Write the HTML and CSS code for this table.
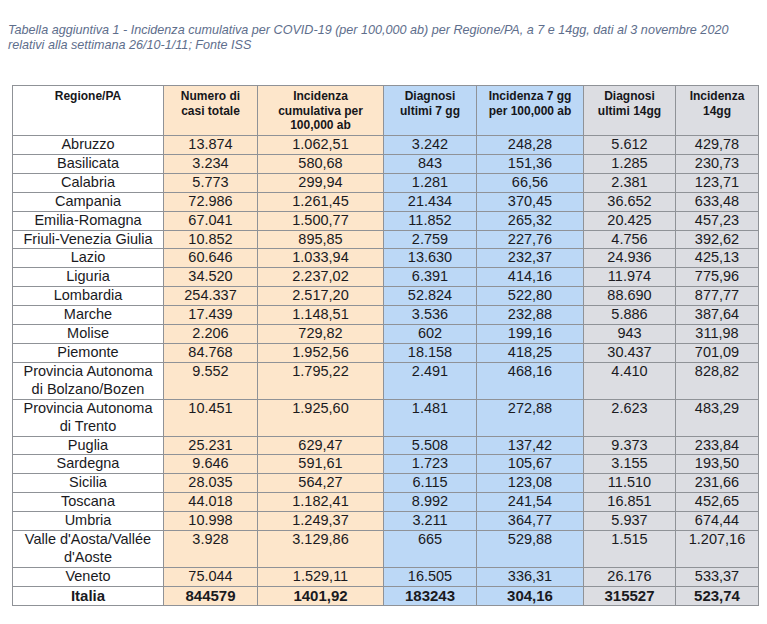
FILE: index.html
```html
<!DOCTYPE html>
<html lang="it">
<head>
<meta charset="utf-8">
<title>Tabella aggiuntiva 1</title>
<link rel="stylesheet" href="styles.css">
</head>
<body>
<div class="page">
  <p class="caption">Tabella aggiuntiva 1 - Incidenza cumulativa per COVID-19 (per 100,000 ab) per Regione/PA, a 7 e 14gg, dati al 3 novembre 2020<br>relativi alla settimana 26/10-1/11; Fonte ISS</p>
  <table class="data">
    <colgroup>
      <col class="w-reg"><col class="w-num"><col class="w-cum"><col class="w-d7"><col class="w-i7"><col class="w-d14"><col class="w-i14">
    </colgroup>
    <thead>
      <tr>
        <th>Regione/PA</th>
        <th class="or">Numero di<br>casi totale</th>
        <th class="or">Incidenza<br>cumulativa per<br>100,000 ab</th>
        <th class="bl">Diagnosi<br>ultimi 7 gg</th>
        <th class="bl">Incidenza 7 gg<br>per 100,000 ab</th>
        <th class="gr">Diagnosi<br>ultimi 14gg</th>
        <th class="gr">Incidenza<br>14gg</th>
      </tr>
    </thead>
    <tbody>
      <tr><td>Abruzzo</td><td class="or">13.874</td><td class="or">1.062,51</td><td class="bl">3.242</td><td class="bl">248,28</td><td class="gr">5.612</td><td class="gr">429,78</td></tr>
      <tr><td>Basilicata</td><td class="or">3.234</td><td class="or">580,68</td><td class="bl">843</td><td class="bl">151,36</td><td class="gr">1.285</td><td class="gr">230,73</td></tr>
      <tr><td>Calabria</td><td class="or">5.773</td><td class="or">299,94</td><td class="bl">1.281</td><td class="bl">66,56</td><td class="gr">2.381</td><td class="gr">123,71</td></tr>
      <tr><td>Campania</td><td class="or">72.986</td><td class="or">1.261,45</td><td class="bl">21.434</td><td class="bl">370,45</td><td class="gr">36.652</td><td class="gr">633,48</td></tr>
      <tr><td>Emilia-Romagna</td><td class="or">67.041</td><td class="or">1.500,77</td><td class="bl">11.852</td><td class="bl">265,32</td><td class="gr">20.425</td><td class="gr">457,23</td></tr>
      <tr><td>Friuli-Venezia Giulia</td><td class="or">10.852</td><td class="or">895,85</td><td class="bl">2.759</td><td class="bl">227,76</td><td class="gr">4.756</td><td class="gr">392,62</td></tr>
      <tr><td>Lazio</td><td class="or">60.646</td><td class="or">1.033,94</td><td class="bl">13.630</td><td class="bl">232,37</td><td class="gr">24.936</td><td class="gr">425,13</td></tr>
      <tr><td>Liguria</td><td class="or">34.520</td><td class="or">2.237,02</td><td class="bl">6.391</td><td class="bl">414,16</td><td class="gr">11.974</td><td class="gr">775,96</td></tr>
      <tr><td>Lombardia</td><td class="or">254.337</td><td class="or">2.517,20</td><td class="bl">52.824</td><td class="bl">522,80</td><td class="gr">88.690</td><td class="gr">877,77</td></tr>
      <tr><td>Marche</td><td class="or">17.439</td><td class="or">1.148,51</td><td class="bl">3.536</td><td class="bl">232,88</td><td class="gr">5.886</td><td class="gr">387,64</td></tr>
      <tr><td>Molise</td><td class="or">2.206</td><td class="or">729,82</td><td class="bl">602</td><td class="bl">199,16</td><td class="gr">943</td><td class="gr">311,98</td></tr>
      <tr><td>Piemonte</td><td class="or">84.768</td><td class="or">1.952,56</td><td class="bl">18.158</td><td class="bl">418,25</td><td class="gr">30.437</td><td class="gr">701,09</td></tr>
      <tr><td>Provincia Autonoma<br>di Bolzano/Bozen</td><td class="or">9.552</td><td class="or">1.795,22</td><td class="bl">2.491</td><td class="bl">468,16</td><td class="gr">4.410</td><td class="gr">828,82</td></tr>
      <tr><td>Provincia Autonoma<br>di Trento</td><td class="or">10.451</td><td class="or">1.925,60</td><td class="bl">1.481</td><td class="bl">272,88</td><td class="gr">2.623</td><td class="gr">483,29</td></tr>
      <tr><td>Puglia</td><td class="or">25.231</td><td class="or">629,47</td><td class="bl">5.508</td><td class="bl">137,42</td><td class="gr">9.373</td><td class="gr">233,84</td></tr>
      <tr><td>Sardegna</td><td class="or">9.646</td><td class="or">591,61</td><td class="bl">1.723</td><td class="bl">105,67</td><td class="gr">3.155</td><td class="gr">193,50</td></tr>
      <tr><td>Sicilia</td><td class="or">28.035</td><td class="or">564,27</td><td class="bl">6.115</td><td class="bl">123,08</td><td class="gr">11.510</td><td class="gr">231,66</td></tr>
      <tr><td>Toscana</td><td class="or">44.018</td><td class="or">1.182,41</td><td class="bl">8.992</td><td class="bl">241,54</td><td class="gr">16.851</td><td class="gr">452,65</td></tr>
      <tr><td>Umbria</td><td class="or">10.998</td><td class="or">1.249,37</td><td class="bl">3.211</td><td class="bl">364,77</td><td class="gr">5.937</td><td class="gr">674,44</td></tr>
      <tr><td>Valle d'Aosta/Vallée<br>d'Aoste</td><td class="or">3.928</td><td class="or">3.129,86</td><td class="bl">665</td><td class="bl">529,88</td><td class="gr">1.515</td><td class="gr">1.207,16</td></tr>
      <tr><td>Veneto</td><td class="or">75.044</td><td class="or">1.529,11</td><td class="bl">16.505</td><td class="bl">336,31</td><td class="gr">26.176</td><td class="gr">533,37</td></tr>
      <tr class="total"><td>Italia</td><td class="or">844579</td><td class="or">1401,92</td><td class="bl">183243</td><td class="bl">304,16</td><td class="gr">315527</td><td class="gr">523,74</td></tr>
    </tbody>
  </table>
</div>
</body>
</html>
```

FILE: styles.css
```css
html, body {
  margin: 0;
  padding: 0;
  background: #ffffff;
}

.page {
  padding: 23px 0 0 12px;
}

.caption {
  margin: 0 0 32px -4px;
  font-family: "Liberation Sans", Arial, sans-serif;
  font-style: italic;
  font-size: 12.6px;
  line-height: 15px;
  white-space: nowrap;
  color: #5e6e8c;
}

.data {
  border-collapse: collapse;
  table-layout: fixed;
  width: 746px;
  font-family: "Liberation Sans", Arial, sans-serif;
  color: #1a1a1e;
  border: 1px solid #8b8d92;
}

.w-reg { width: 151px; }
.w-num { width: 94px; }
.w-cum { width: 126px; }
.w-d7 { width: 93px; }
.w-i7 { width: 107px; }
.w-d14 { width: 92px; }
.w-i14 { width: 83px; }

.data th,
.data td {
  border: 1px solid #8f9297;
  padding: 0;
  text-align: center;
  vertical-align: top;
}

.data th {
  height: 46px;
  padding-top: 3px;
  font-size: 12px;
  line-height: 14.5px;
  font-weight: bold;
  color: #16161a;
}

.data td {
  font-size: 14.5px;
  line-height: 17.9px;
}

.data .total td {
  font-weight: bold;
  font-size: 15px;
}

.or { background: #fde6cb; }
.bl { background: #bcd8f6; }
.gr { background: #dcdde2; }
```
